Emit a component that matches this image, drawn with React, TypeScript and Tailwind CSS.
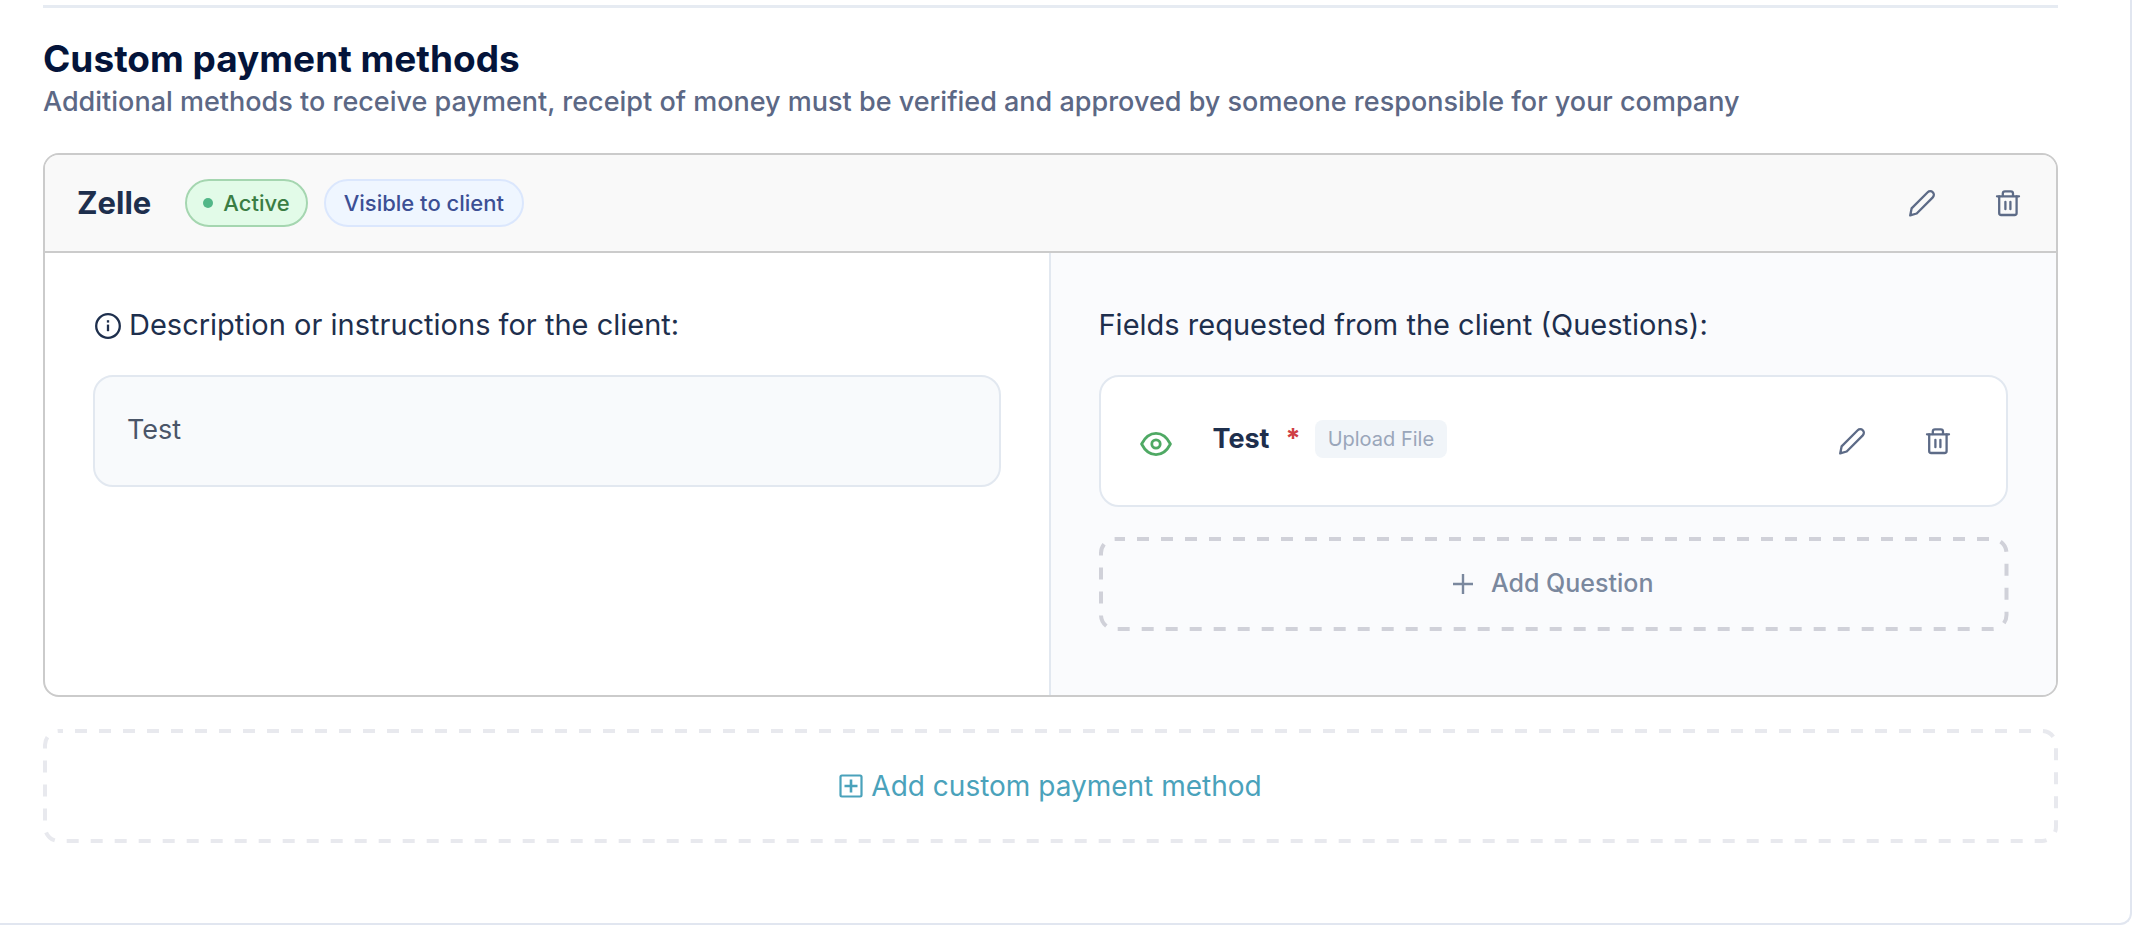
import React from "react";

const PencilIcon = () => (
  <svg viewBox="0 0 28 28" className="size-7" fill="none" stroke="currentColor" strokeWidth="2.3" strokeLinejoin="round" aria-hidden="true">
    <path d="M2.2 26.4 L3.6 19.4 L19.7 3.3 A3.5 3.5 0 0 1 24.8 8.4 L8.7 24.5 Z" />
  </svg>
);

const TrashIcon = () => (
  <svg viewBox="0 0 28 28" className="size-7" fill="none" stroke="currentColor" strokeWidth="2.3" strokeLinecap="round" strokeLinejoin="round" aria-hidden="true">
    <path d="M3 7.3h22" />
    <path d="M8.8 7V4.6a2.2 2.2 0 0 1 2.2-2.2h5.8A2.2 2.2 0 0 1 19 4.6V7" />
    <path d="M5.2 7.5V24a2 2 0 0 0 2 2h13.4a2 2 0 0 0 2-2V7.5" />
    <path d="M11.4 12.8v7.4M16.4 12.8v7.4" />
  </svg>
);

const InfoIcon = () => (
  <svg viewBox="0 0 28 28" className="size-7" fill="none" stroke="currentColor" strokeWidth="2.3" aria-hidden="true">
    <circle cx="15" cy="15" r="11.8" />
    <path d="M15 13.6v6.6" />
    <path d="M15 9.2v2.4" />
  </svg>
);

const EyeIcon = () => (
  <svg viewBox="0 0 32 26" className="h-[26px] w-8" fill="none" stroke="currentColor" strokeWidth="2.8" strokeLinejoin="round" aria-hidden="true">
    <path d="M1.6 13C5.4 5.6 10.4 2.4 16 2.4S26.6 5.6 30.4 13C26.6 20.4 21.6 23.6 16 23.6S5.4 20.4 1.6 13Z" />
    <circle cx="16" cy="13" r="4.2" />
  </svg>
);

const PlusIcon = () => (
  <svg viewBox="0 0 20 20" className="size-5" fill="none" stroke="currentColor" strokeWidth="2.4" aria-hidden="true">
    <path d="M10 0v20M0 10h20" />
  </svg>
);

const PlusSquareIcon = () => (
  <svg viewBox="0 0 24 24" className="size-6" fill="none" stroke="currentColor" strokeWidth="2.2" aria-hidden="true">
    <rect x="1.5" y="1.5" width="21" height="21" rx="1.4" />
    <path d="M12 5.5v13M5.5 12h13" strokeWidth="2.6" />
  </svg>
);

// border-dashed gives dashes that are too short, so the outline is stroked
const DashedOutline = ({ color, offset }: { color: string; offset: number }) => (
  <svg className="pointer-events-none absolute inset-[2px] size-[calc(100%-4px)] overflow-visible" fill="none" aria-hidden="true">
    <rect width="100%" height="100%" rx="14" stroke={color} strokeWidth="4" strokeDasharray="12 12" strokeDashoffset={offset} />
  </svg>
);

const RowActions = ({ name }: { name: string }) => (
  <div className="ml-auto flex gap-[38px] text-[#5d6b87]">
    <button type="button" aria-label={`Edit ${name}`} className="flex size-12 items-center justify-center">
      <PencilIcon />
    </button>
    <button type="button" aria-label={`Delete ${name}`} className="flex size-12 items-center justify-center">
      <TrashIcon />
    </button>
  </div>
);

const questions = [{ id: 1, label: "Test", type: "Upload File", required: true }];

const CustomPaymentMethods = () => {
  return (
    <div className="mr-2 rounded-br-xl border-r-2 border-b-2 border-[#e1e6f0] bg-white pt-[5px] pr-[72px] pb-20 pl-[43px] font-['Inter',sans-serif]">
      <hr className="border-t-[3px] border-[#e6ebf2]" />

      {/* Section heading */}
      <h2 className="mt-[29px] text-[37px] leading-[44px] font-bold text-[#04143a]">Custom payment methods</h2>
      <p className="text-[27px] leading-[42px] font-medium text-[#5c6885]">
        Additional methods to receive payment, receipt of money must be verified and approved by someone responsible for
        your company
      </p>

      {/* Method card */}
      <section className="mt-[30px] overflow-hidden rounded-2xl border-2 border-[#cbcbcb]">
        <header className="flex items-center border-b-2 border-[#cbcbcb] bg-[#f9f9f9] py-6 pr-6 pl-8">
          <h3 className="text-[31px] leading-[40px] font-bold text-[#1e2f4d]">Zelle</h3>
          <div className="ml-[34px] flex gap-4 text-[22px] font-medium">
            <span className="flex h-12 items-center gap-[10px] rounded-full border-2 border-[#a5d6b0] bg-[#e2fbe8] px-4 text-[#3a7d44]">
              <span className="size-[10px] rounded-full bg-[#52b788]" />
              Active
            </span>
            <span className="flex h-12 items-center rounded-full border-2 border-[#dbe7fd] bg-[#eff6ff] px-[18px] text-[#3c4f94]">
              Visible to client
            </span>
          </div>
          <RowActions name="Zelle" />
        </header>

        <div className="grid grid-cols-2">
          {/* Description */}
          <div className="border-r-2 border-[#e2e8f0] p-12">
            <h4 className="flex items-center gap-2 text-[29px] leading-[48px] text-[#1e2f4d]">
              <InfoIcon />
              Description or instructions for the client:
            </h4>
            <p className="mt-[26px] rounded-[20px] border-2 border-[#e2e8f0] bg-[#f8fafc] px-8 pt-8 pb-[34px] text-[27px] leading-[42px] text-[#4a5568]">
              Test
            </p>
          </div>

          {/* Questions */}
          <div className="bg-[#fafbfd] p-12 pb-16">
            <h4 className="text-[29px] leading-[48px] text-[#1e2f4d]">Fields requested from the client (Questions):</h4>
            {questions.map(q => (
              <div
                key={q.id}
                className="mt-[26px] flex h-[132px] items-center rounded-[20px] border-2 border-[#e2e8f0] bg-white pr-11 pl-[39px]"
              >
                <span className="pt-[6px] text-[#4fa964]">
                  <EyeIcon />
                </span>
                <div className="ml-[41px] flex items-center pb-1">
                  <span className="text-[27px] leading-[40px] font-bold text-[#1e2f4d]">{q.label}</span>
                  {q.required && <span className="ml-4 text-[27px] leading-[40px] font-bold text-[#cf3f45]">*</span>}
                  <span className="ml-[14px] rounded-lg bg-[#f1f5f9] px-[13px] text-[20px] leading-[38px] text-[#9aa6ba]">
                    {q.type}
                  </span>
                </div>
                <RowActions name={q.label} />
              </div>
            ))}
            <button
              type="button"
              className="relative mt-[30px] flex h-[94px] w-full items-center justify-center gap-[18px] rounded-2xl text-[25px] font-medium text-[#7a889e]"
            >
              <DashedOutline color="#d0d1d9" offset={2} />
              <PlusIcon />
              Add Question
            </button>
          </div>
        </div>
      </section>

      <button
        type="button"
        className="relative mt-8 flex h-[114px] w-full items-center justify-center gap-2 rounded-2xl text-[28px] text-[#4aa2bb]"
      >
        <DashedOutline color="#e8e9ee" offset={8} />
        <PlusSquareIcon />
        Add custom payment method
      </button>
    </div>
  );
};

export default CustomPaymentMethods;
